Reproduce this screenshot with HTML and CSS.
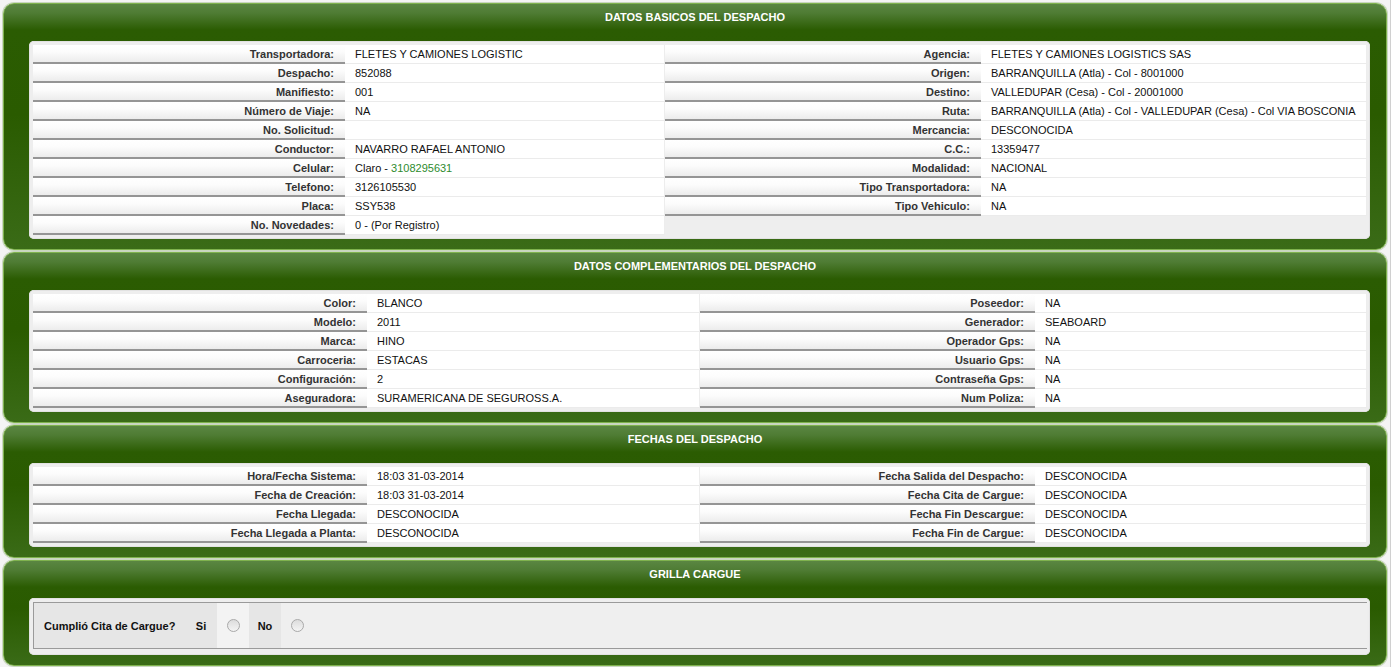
FILE: index.html
```html
<!DOCTYPE html>
<html lang="es">
<head>
<meta charset="utf-8">
<title>Despacho</title>
<link rel="stylesheet" href="styles.css">
</head>
<body>
<div class="page">

<section class="panel">
  <h2 class="panel-title">DATOS BASICOS DEL DESPACHO</h2>
  <div class="box">
    <div class="cols cols-basic">
      <div class="grid grid-left">
        <div class="lbl">Transportadora:</div><div class="val">FLETES Y CAMIONES LOGISTIC</div>
        <div class="lbl">Despacho:</div><div class="val">852088</div>
        <div class="lbl">Manifiesto:</div><div class="val">001</div>
        <div class="lbl">Número de Viaje:</div><div class="val">NA</div>
        <div class="lbl">No. Solicitud:</div><div class="val"></div>
        <div class="lbl">Conductor:</div><div class="val">NAVARRO RAFAEL ANTONIO</div>
        <div class="lbl">Celular:</div><div class="val">Claro - <span class="phone">3108295631</span></div>
        <div class="lbl">Telefono:</div><div class="val">3126105530</div>
        <div class="lbl">Placa:</div><div class="val">SSY538</div>
        <div class="lbl">No. Novedades:</div><div class="val">0 - (Por Registro)</div>
      </div>
      <div class="grid grid-right">
        <div class="lbl">Agencia:</div><div class="val">FLETES Y CAMIONES LOGISTICS SAS</div>
        <div class="lbl">Origen:</div><div class="val">BARRANQUILLA (Atla) - Col - 8001000</div>
        <div class="lbl">Destino:</div><div class="val">VALLEDUPAR (Cesa) - Col - 20001000</div>
        <div class="lbl">Ruta:</div><div class="val">BARRANQUILLA (Atla) - Col - VALLEDUPAR (Cesa) - Col VIA BOSCONIA</div>
        <div class="lbl">Mercancia:</div><div class="val">DESCONOCIDA</div>
        <div class="lbl">C.C.:</div><div class="val">13359477</div>
        <div class="lbl">Modalidad:</div><div class="val">NACIONAL</div>
        <div class="lbl">Tipo Transportadora:</div><div class="val">NA</div>
        <div class="lbl">Tipo Vehiculo:</div><div class="val">NA</div>
      </div>
    </div>
  </div>
</section>

<section class="panel">
  <h2 class="panel-title">DATOS COMPLEMENTARIOS DEL DESPACHO</h2>
  <div class="box">
    <div class="cols cols-half">
      <div class="grid grid-half">
        <div class="lbl">Color:</div><div class="val">BLANCO</div>
        <div class="lbl">Modelo:</div><div class="val">2011</div>
        <div class="lbl">Marca:</div><div class="val">HINO</div>
        <div class="lbl">Carroceria:</div><div class="val">ESTACAS</div>
        <div class="lbl">Configuración:</div><div class="val">2</div>
        <div class="lbl">Aseguradora:</div><div class="val">SURAMERICANA DE SEGUROSS.A.</div>
      </div>
      <div class="grid grid-half">
        <div class="lbl">Poseedor:</div><div class="val">NA</div>
        <div class="lbl">Generador:</div><div class="val">SEABOARD</div>
        <div class="lbl">Operador Gps:</div><div class="val">NA</div>
        <div class="lbl">Usuario Gps:</div><div class="val">NA</div>
        <div class="lbl">Contraseña Gps:</div><div class="val">NA</div>
        <div class="lbl">Num Poliza:</div><div class="val">NA</div>
      </div>
    </div>
  </div>
</section>

<section class="panel">
  <h2 class="panel-title">FECHAS DEL DESPACHO</h2>
  <div class="box">
    <div class="cols cols-half">
      <div class="grid grid-half">
        <div class="lbl">Hora/Fecha Sistema:</div><div class="val">18:03 31-03-2014</div>
        <div class="lbl">Fecha de Creación:</div><div class="val">18:03 31-03-2014</div>
        <div class="lbl">Fecha Llegada:</div><div class="val">DESCONOCIDA</div>
        <div class="lbl">Fecha Llegada a Planta:</div><div class="val">DESCONOCIDA</div>
      </div>
      <div class="grid grid-half">
        <div class="lbl">Fecha Salida del Despacho:</div><div class="val">DESCONOCIDA</div>
        <div class="lbl">Fecha Cita de Cargue:</div><div class="val">DESCONOCIDA</div>
        <div class="lbl">Fecha Fin Descargue:</div><div class="val">DESCONOCIDA</div>
        <div class="lbl">Fecha Fin de Cargue:</div><div class="val">DESCONOCIDA</div>
      </div>
    </div>
  </div>
</section>

<section class="panel">
  <h2 class="panel-title">GRILLA CARGUE</h2>
  <div class="box">
    <div class="field">
      <div class="fcell fq">Cumplió Cita de Cargue?</div>
      <div class="fcell fopt">Si</div>
      <div class="fcell fradio fradio-a"><span class="radio"></span></div>
      <div class="fcell fopt">No</div>
      <div class="fcell fradio"><span class="radio"></span></div>
    </div>
  </div>
</section>

</div>
</body>
</html>
```

FILE: styles.css
```css
html, body {
  margin: 0;
  padding: 0;
  background: #ffffff;
}

body {
  font-family: "Liberation Sans", Arial, sans-serif;
  font-size: 11px;
  color: #111;
}

.page {
  padding: 3px 0 0 0;
  width: 1391px;
  border-right: 1px solid #d0d0d0;
  background: #f4f4f4;
  min-height: 667px;
  box-sizing: border-box;
}

.panel {
  margin: 0 3px 2px 3px;
  border: 1px solid #7fb24e;
  border-radius: 11px;
  box-shadow: 0 0 0 1px #c9d6c0;
  background: linear-gradient(to bottom, #5a8642 0, #4f7c34 9px, #2b5c02 26px, #2a5b00 45%, #3a6b17 100%);
  padding: 0 16px 10px 25px;
}

.panel-title {
  margin: 0;
  height: 27px;
  line-height: 27px;
  text-align: center;
  color: #ffffff;
  font-size: 11px;
  font-weight: bold;
  margin-left: -25px;
  margin-right: -16px;
  margin-bottom: 10px;
}

.box {
  background: #eeeeee;
  border-radius: 5px;
  padding: 4px 3px 4px 4px;
  box-shadow: inset 0 0 0 1px #e2e2e2;
}

.cols {
  display: flex;
  align-items: flex-start;
}

.grid {
  display: grid;
  grid-auto-rows: 19px;
}

.grid-left {
  width: 632px;
  grid-template-columns: 312px 1fr;
}

.grid-right {
  flex: 1;
  grid-template-columns: 316px 1fr;
}

.grid-half {
  flex: 1;
  grid-template-columns: 1fr 1fr;
}

.grid-half:first-child {
  flex: 0 0 667px;
  grid-template-columns: 334px 1fr;
}

.grid-half:last-child {
  grid-template-columns: 335px 1fr;
}

.lbl {
  box-sizing: border-box;
  height: 19px;
  line-height: 18px;
  text-align: right;
  padding-right: 11px;
  font-weight: bold;
  color: #333333;
  background: linear-gradient(to bottom, #ffffff 0, #fcfcfc 40%, #ececec 100%);
  border-bottom: 2px solid #959595;
  white-space: nowrap;
}

.val {
  box-sizing: border-box;
  height: 19px;
  line-height: 19px;
  padding-left: 10px;
  background: #ffffff;
  border-bottom: 1px solid #ebebeb;
  border-right: 1px solid #ededed;
  color: #111111;
  white-space: nowrap;
}

.phone {
  color: #2e8b2e;
}

.field {
  display: flex;
  height: 45px;
  border-top: 1px solid #9a9a9a;
  border-bottom: 1px solid #9a9a9a;
  border-left: 1px solid #9a9a9a;
  background: #efefef;
  margin-bottom: 2px;
}

.fcell {
  display: flex;
  align-items: center;
  font-weight: bold;
  color: #111;
}

.fq {
  width: 151px;
  padding-left: 10px;
  box-sizing: border-box;
  background: #e6e6e6;
}

.fopt {
  width: 32px;
  justify-content: center;
  background: #e6e6e6;
}

.fradio {
  width: 32px;
  justify-content: center;
}

.fradio-a {
  background: #f3f3f3;
}

.radio {
  display: block;
  width: 11px;
  height: 11px;
  border-radius: 50%;
  border: 1px solid #a9a9a9;
  background: linear-gradient(to bottom, #dcdcdc, #f4f4f4);
}
```
